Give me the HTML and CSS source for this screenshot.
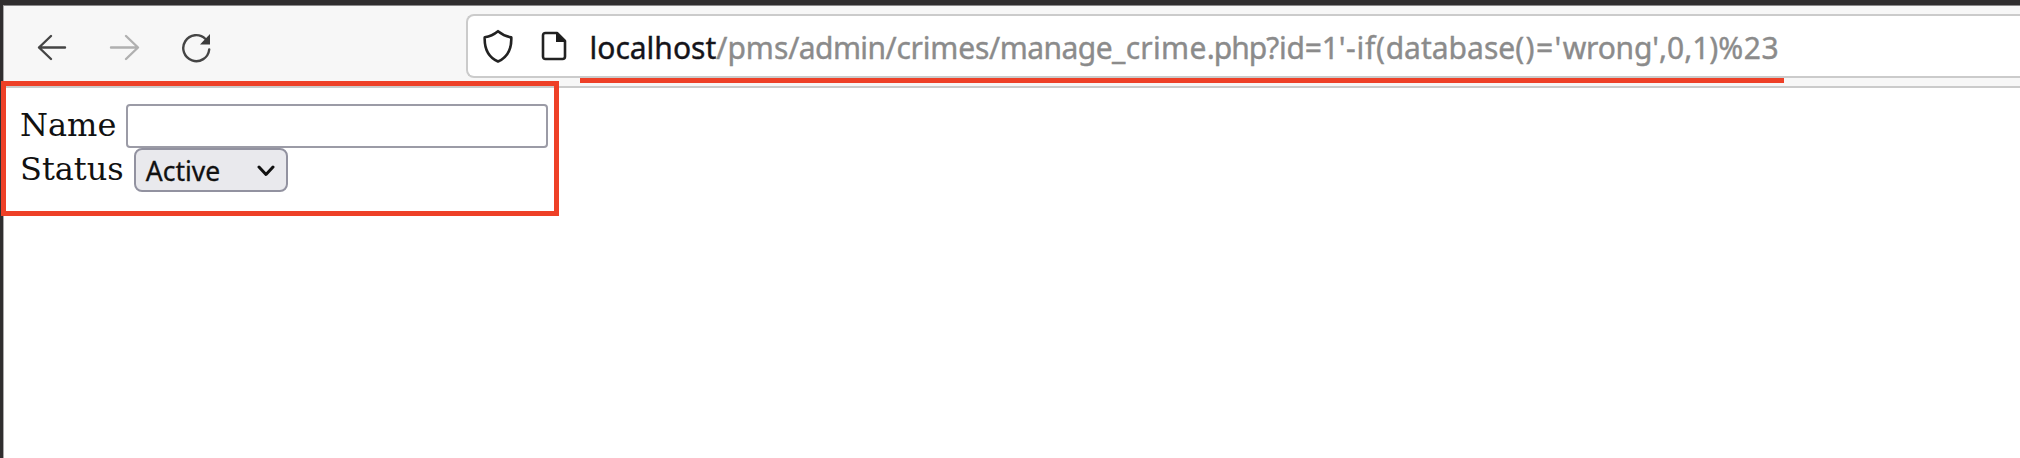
FILE: index.html
```html
<!DOCTYPE html>
<html lang="en">
<head>
<meta charset="utf-8">
<title>Manage crime</title>
<link rel="stylesheet" href="styles.css">
</head>
<body>
<div class="window">
  <header class="toolbar">
    <nav class="nav">
      <svg class="icon" width="32" height="32" viewBox="0 0 32 32"><path d="M29 16.500H3M15 5L3 16.500L15 28"/></svg>
      <svg class="icon disabled" width="32" height="32" viewBox="0 0 32 32"><path d="M3 16.500H29M18 5L30 16.500L18 28"/></svg>
      <svg class="icon" width="32" height="32" viewBox="0 0 32 32"><path d="M25.500 8A13 13 0 1 0 29.200 18.500"/><path class="solid" d="M30 3V13.500H20Z"/></svg>
    </nav>
    <div class="urlbar">
      <svg class="icon dark" width="32" height="34" viewBox="0 0 32 34"><path d="M16 2.200C12 5.500 7.500 7.500 2.700 8.300C2.300 19 6 28 16 32.500C26 28 29.700 19 29.300 8.300C24.500 7.500 20 5.500 16 2.200Z"/></svg>
      <svg class="icon dark page" width="26" height="30" viewBox="0 0 26 30"><path d="M4.500 2H16L24 10V25.500Q24 28 21.500 28H4.500Q2 28 2 25.500V4.500Q2 2 4.500 2Z"/><path class="solid" d="M15 1.500V11H24.500Z"/></svg>
      <div class="url"><span class="host">localhost</span><span>/pms</span><span class="s1">/admin</span><span class="s2">/crimes</span><span class="s3">/manage</span><span class="s4">_crime</span><span class="s5">.php</span><span class="s2">?id=1</span><span class="s6">'-if(</span><span>database</span><span class="s7">()='</span><span class="s2">wrong</span><span>',0,1)</span><span class="s8">%23</span></div>
    </div>
    <div class="underline"></div>
  </header>
  <main class="form">
    <div class="row"><label for="name">Name</label><input class="field" id="name" type="text"></div>
    <div class="row"><span>Status</span>
      <div class="select"><span>Active</span><svg class="chevron" width="18" height="12" viewBox="0 0 18 12"><path d="M2 2L9 9.500L16 2"/></svg></div>
    </div>
  </main>
</div>
<div class="highlight"></div>
</body>
</html>
```
FILE: styles.css
```css
* { box-sizing: border-box; }
body {
  margin: 0;
  height: 458px;
  overflow: hidden;
  position: relative;
  padding: 5px 0 0 3px;
  background: #302e2f;
}
.window {
  height: 453px;
  background: #fff;
  border-top: 1px solid #8a898a;
  border-left: 1px solid #aaa9aa;
}
.toolbar {
  position: relative;
  display: flex;
  align-items: flex-start;
  height: 82px;
  padding: 8px 0 0 32px;
  background: #f7f7f7;
  border-bottom: 2px solid #cbcbcb;
}
.nav {
  display: flex;
  gap: 40px;
  width: 430px;
  padding-top: 17px;
}
.icon { display: block; flex: none; fill: none; stroke: #454545; stroke-width: 2.4; stroke-linejoin: round; stroke-linecap: round; }
.icon.disabled { stroke: #b0b0b0; }
.icon.dark { stroke: #222; stroke-width: 2.6; }
.icon .solid { fill: #3c3c3c; stroke: none; }
.icon.dark .solid { fill: #1c1c1c; }
.urlbar {
  display: flex;
  flex: 1;
  align-items: center;
  height: 64px;
  padding-left: 14px;
  background: #fff;
  border: 2px solid #cbcbcb;
  border-right: 0;
  border-radius: 8px 0 0 8px;
}
.page { margin-left: 27px; }
.url {
  margin-left: 22.500px;
  padding-top: 3px;
  font: 30px/40px "Noto Sans", sans-serif;
  -webkit-text-stroke: 0.4px;
  white-space: nowrap;
  color: #8b8b8b;
}
.host { color: #15141a; }
.s1 { letter-spacing: -0.6px; }
.s2 { letter-spacing: -0.2px; }
.s3 { letter-spacing: -0.55px; }
.s4 { letter-spacing: 0.3px; }
.s5 { letter-spacing: -1px; }
.s6 { letter-spacing: 0.7px; }
.s7 { letter-spacing: 1.4px; }
.s8 { letter-spacing: 0.5px; }
.underline {
  position: absolute;
  left: 576px;
  top: 72px;
  width: 1204px;
  height: 5px;
  background: #ee4027;
}
.form {
  padding: 16px 0 0 16px;
  font: 32px/42px "DejaVu Serif", serif;
  color: #111;
}
.row { display: flex; height: 44px; gap: 10px; }
.field {
  width: 422px;
  height: 44px;
  border: 2px solid #9b9ba6;
  border-radius: 4px;
  background: #fff;
}
.select {
  display: flex;
  align-items: center;
  justify-content: space-between;
  width: 154px;
  height: 44px;
  padding: 2px 11px 0 10px;
  border: 2px solid #9292a0;
  border-radius: 8px;
  background: #e9e9ed;
  font: 26.500px/38px "Noto Sans", sans-serif;
  -webkit-text-stroke: 0.3px;
}
.chevron { fill: none; stroke: #111; stroke-width: 3; stroke-linecap: round; stroke-linejoin: round; }
.highlight {
  position: absolute;
  left: 1px;
  top: 81px;
  width: 558px;
  height: 135px;
  border: 5px solid #ee4027;
}
```
